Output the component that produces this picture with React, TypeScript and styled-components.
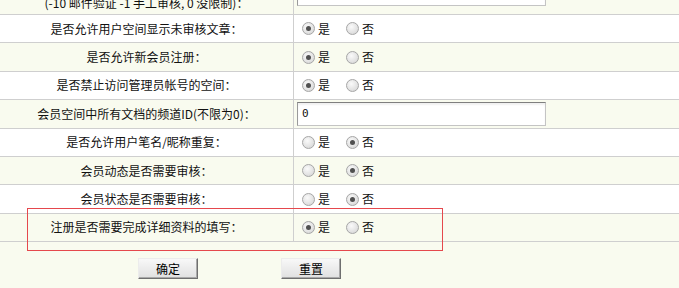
import React from 'react';
import styled, { createGlobalStyle } from 'styled-components';

const GlobalStyle = createGlobalStyle`
  html, body {
    margin: 0;
    padding: 0;
    background: #f9fbef;
  }
  body {
    font-family: 'Noto Sans CJK SC', 'DejaVu Sans', sans-serif;
    font-size: 12px;
    color: #111;
  }
`;

interface RadioRow {
  label: string;
  value: boolean;
}

const topRows: RadioRow[] = [
  { label: '是否允许用户空间显示未审核文章：', value: true },
  { label: '是否允许新会员注册：', value: true },
  { label: '是否禁止访问管理员帐号的空间：', value: true },
];

const bottomRows: RadioRow[] = [
  { label: '是否允许用户笔名/昵称重复：', value: false },
  { label: '会员动态是否需要审核：', value: false },
  { label: '会员状态是否需要审核：', value: false },
  { label: '注册是否需要完成详细资料的填写：', value: true },
];

const YesNo = ({ name, value }: { name: string; value: boolean }) => (
  <>
    <Choice>
      <Radio type="radio" name={name} defaultChecked={value} />是
    </Choice>
    <Choice>
      <Radio type="radio" name={name} defaultChecked={!value} />否
    </Choice>
  </>
);

const App = () => {
  let index = 0;
  const renderRow = (row: RadioRow) => {
    index += 1;
    const name = `opt${index}`;
    return (
      <Row key={name} $alt={index % 2 === 0}>
        <Label>{row.label}</Label>
        <Field>
          <YesNo name={name} value={row.value} />
        </Field>
      </Row>
    );
  };

  return (
    <Page>
      <GlobalStyle />
      <Table>
        <CutRow>
          <CutLabel>(-10 邮件验证 -1 手工审核, 0 没限制)：</CutLabel>
          <CutField>
            <TextInput defaultValue="" />
          </CutField>
        </CutRow>
        {topRows.map(renderRow)}
        <Row $alt>
          <Label>会员空间中所有文档的频道ID(不限为0)：</Label>
          <Field>
            <TextInput defaultValue="0" />
          </Field>
        </Row>
        {(() => {
          index += 1;
          return null;
        })()}
        {bottomRows.map(renderRow)}
      </Table>
      <Footer>
        <Button type="button">确定</Button>
        <Button type="button">重置</Button>
      </Footer>
      <Highlight />
    </Page>
  );
};

const Page = styled.div`
  position: relative;
  min-height: 288px;
  background: #f9fbef;
  overflow: hidden;
`;

const Table = styled.div`
  display: flex;
  flex-direction: column;
`;

const Row = styled.div<{ $alt?: boolean }>`
  display: flex;
  box-sizing: border-box;
  height: 28.4px;
  border-bottom: 1px solid #cfcfcf;
  background: ${(props) => (props.$alt ? '#f9fbef' : '#ffffff')};
`;

const CutRow = styled(Row)`
  height: 15px;
  overflow: hidden;
  align-items: flex-end;
  background: #f9fbef;
`;

const Label = styled.div`
  width: 293px;
  flex-shrink: 0;
  border-right: 1px solid #cfcfcf;
  display: flex;
  align-items: center;
  justify-content: center;
  white-space: nowrap;
  line-height: 12px;
`;

const CutLabel = styled(Label)`
  align-self: stretch;
  align-items: flex-end;
  padding-bottom: 5px;
`;

const Field = styled.div`
  flex: 1;
  display: flex;
  align-items: center;
  padding-left: 3px;
`;

const CutField = styled(Field)`
  align-self: stretch;
  align-items: flex-end;
  padding-bottom: 8px;
`;

const Choice = styled.label`
  display: inline-flex;
  align-items: center;
  margin-right: 11px;
  line-height: 12px;
`;

const Radio = styled.input`
  appearance: none;
  width: 13px;
  height: 13px;
  margin: 0 3px 0 5px;
  border-radius: 50%;
  border: 1px solid #a6a6a6;
  box-sizing: border-box;
  background: radial-gradient(circle at 40% 35%, #fafafa 0%, #e2e2e2 60%, #cfcfcf 100%);
  position: relative;

  &:checked::after {
    content: '';
    position: absolute;
    left: 3px;
    top: 3px;
    width: 5px;
    height: 5px;
    border-radius: 50%;
    background: #505050;
  }
`;

const TextInput = styled.input`
  box-sizing: border-box;
  width: 249px;
  height: 24px;
  margin: 0;
  padding: 0 4px;
  font-family: 'DejaVu Sans Mono', monospace;
  font-size: 11px;
  color: #111;
  background: #fff;
  border: 1px solid #c4c4c4;
  border-top-color: #7f7f7f;
  border-left-color: #9a9a9a;
  box-shadow: inset 0 2px 2px rgba(0, 0, 0, 0.06);
  outline: none;
`;

const Footer = styled.div`
  display: flex;
  gap: 83px;
  padding: 16px 0 0 138px;
`;

const Button = styled.button`
  box-sizing: border-box;
  width: 60px;
  height: 21px;
  padding: 0;
  font-family: 'Noto Sans CJK SC', sans-serif;
  font-size: 12px;
  line-height: 12px;
  color: #000;
  background: linear-gradient(#f8f8f8, #e0e0e0);
  border: 1px solid #ececec;
  border-right-color: #6f6f6f;
  border-bottom-color: #6f6f6f;
  box-shadow: inset -1px -1px 0 #a9a9a9;
`;

const Highlight = styled.div`
  position: absolute;
  left: 27px;
  top: 208px;
  width: 416px;
  height: 43px;
  box-sizing: border-box;
  border: 1px solid #e5484d;
  pointer-events: none;
`;

export default App;
